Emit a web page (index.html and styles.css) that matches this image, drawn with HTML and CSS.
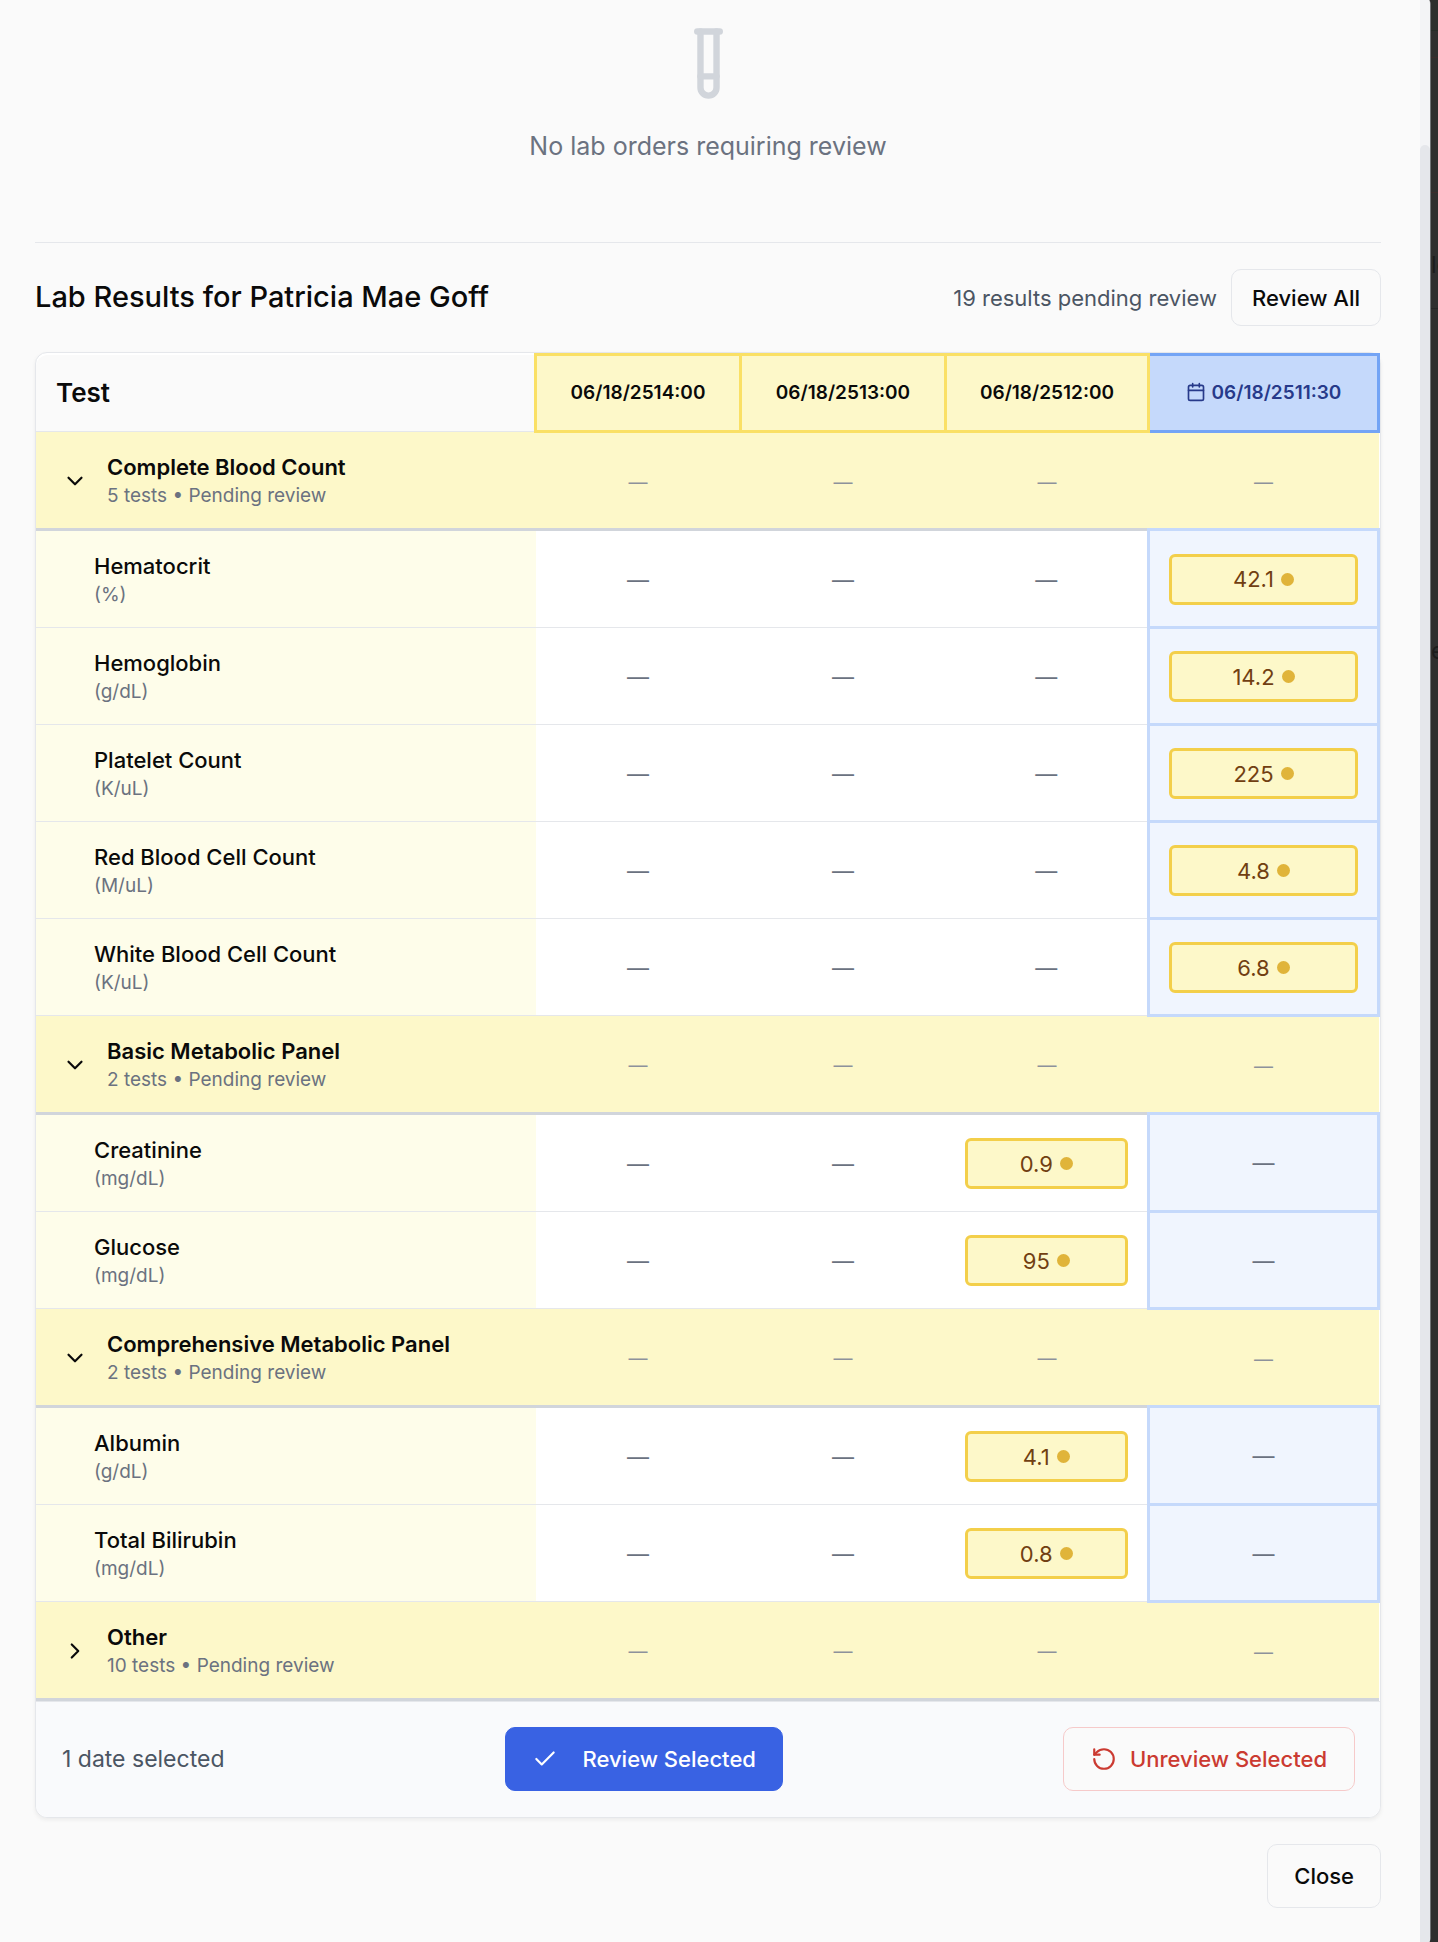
FILE: index.html
```html
<!DOCTYPE html>
<html lang="en">
<head>
<meta charset="utf-8">
<title>Lab Results</title>
<link rel="stylesheet" href="styles.css">
</head>
<body>
<main class="dialog">
  <div class="content">
    <section class="empty">
      <svg class="tube" viewBox="0 0 24 24"><path d="M14.5 2v17.5c0 1.4-1.1 2.5-2.5 2.5s-2.5-1.1-2.5-2.5V2"/><path d="M8.5 2h7"/><path d="M14.5 16h-5"/></svg>
      <p>No lab orders requiring review</p>
    </section>
    <section class="results">
      <header class="results-head">
        <h2>Lab Results for Patricia Mae Goff</h2>
        <div class="pending"><span>19 results pending review</span><button class="btn btn-small">Review All</button></div>
      </header>
      <div class="card">
        <table>
          <colgroup><col><col class="c-date"><col class="c-date"><col class="c-date-last"><col class="c-selected"></colgroup>
          <thead>
            <tr>
              <th class="corner" scope="col">Test</th>
              <th class="date" scope="col">06/18/2514:00</th>
              <th class="date" scope="col">06/18/2513:00</th>
              <th class="date" scope="col">06/18/2512:00</th>
              <th class="date picked" scope="col"><svg class="cal" viewBox="0 0 24 24"><path d="M8 2v4M16 2v4M3 10h18"/><rect x="3" y="4" width="18" height="18" rx="2"/></svg>06/18/2511:30</th>
            </tr>
          </thead>
          <tbody>
            <tr class="group"><th scope="row"><div class="group-label"><button class="toggle" aria-label="Collapse Complete Blood Count"><svg viewBox="0 0 24 24"><path d="m6 9 6 6 6-6"/></svg></button><div><div class="name">Complete Blood Count</div><div class="sub">5 tests • Pending review</div></div></div></th><td>—</td><td>—</td><td>—</td><td>—</td></tr>
            <tr class="test"><th scope="row"><div class="name">Hematocrit</div><div class="sub">(%)</div></th><td>—</td><td>—</td><td>—</td><td class="sel"><div class="value">42.1<i class="dot"></i></div></td></tr>
            <tr class="test"><th scope="row"><div class="name">Hemoglobin</div><div class="sub">(g/dL)</div></th><td>—</td><td>—</td><td>—</td><td class="sel"><div class="value">14.2<i class="dot"></i></div></td></tr>
            <tr class="test"><th scope="row"><div class="name">Platelet Count</div><div class="sub">(K/uL)</div></th><td>—</td><td>—</td><td>—</td><td class="sel"><div class="value">225<i class="dot"></i></div></td></tr>
            <tr class="test"><th scope="row"><div class="name">Red Blood Cell Count</div><div class="sub">(M/uL)</div></th><td>—</td><td>—</td><td>—</td><td class="sel"><div class="value">4.8<i class="dot"></i></div></td></tr>
            <tr class="test"><th scope="row"><div class="name">White Blood Cell Count</div><div class="sub">(K/uL)</div></th><td>—</td><td>—</td><td>—</td><td class="sel"><div class="value">6.8<i class="dot"></i></div></td></tr>
            <tr class="group"><th scope="row"><div class="group-label"><button class="toggle" aria-label="Collapse Basic Metabolic Panel"><svg viewBox="0 0 24 24"><path d="m6 9 6 6 6-6"/></svg></button><div><div class="name">Basic Metabolic Panel</div><div class="sub">2 tests • Pending review</div></div></div></th><td>—</td><td>—</td><td>—</td><td>—</td></tr>
            <tr class="test"><th scope="row"><div class="name">Creatinine</div><div class="sub">(mg/dL)</div></th><td>—</td><td>—</td><td><div class="value">0.9<i class="dot"></i></div></td><td class="sel">—</td></tr>
            <tr class="test"><th scope="row"><div class="name">Glucose</div><div class="sub">(mg/dL)</div></th><td>—</td><td>—</td><td><div class="value">95<i class="dot"></i></div></td><td class="sel">—</td></tr>
            <tr class="group"><th scope="row"><div class="group-label"><button class="toggle" aria-label="Collapse Comprehensive Metabolic Panel"><svg viewBox="0 0 24 24"><path d="m6 9 6 6 6-6"/></svg></button><div><div class="name">Comprehensive Metabolic Panel</div><div class="sub">2 tests • Pending review</div></div></div></th><td>—</td><td>—</td><td>—</td><td>—</td></tr>
            <tr class="test"><th scope="row"><div class="name">Albumin</div><div class="sub">(g/dL)</div></th><td>—</td><td>—</td><td><div class="value">4.1<i class="dot"></i></div></td><td class="sel">—</td></tr>
            <tr class="test"><th scope="row"><div class="name">Total Bilirubin</div><div class="sub">(mg/dL)</div></th><td>—</td><td>—</td><td><div class="value">0.8<i class="dot"></i></div></td><td class="sel">—</td></tr>
            <tr class="group"><th scope="row"><div class="group-label"><button class="toggle" aria-label="Expand Other"><svg viewBox="0 0 24 24"><path d="m9 18 6-6-6-6"/></svg></button><div><div class="name">Other</div><div class="sub">10 tests • Pending review</div></div></div></th><td>—</td><td>—</td><td>—</td><td>—</td></tr>
          </tbody>
        </table>
        <footer class="card-foot">
          <span class="count">1 date selected</span>
          <button class="btn btn-primary"><svg viewBox="0 0 24 24"><path d="M20 6 9 17l-5-5"/></svg>Review Selected</button>
          <button class="btn btn-danger"><svg viewBox="0 0 24 24"><path d="M3 12a9 9 0 1 0 9-9 9.75 9.75 0 0 0-6.74 2.74L3 8"/><path d="M3 3v5h5"/></svg>Unreview Selected</button>
        </footer>
      </div>
    </section>
    <div class="actions"><button class="btn">Close</button></div>
  </div>
  <div class="scroll-track"><div class="scroll-thumb"></div></div>
</main>
<aside class="backdrop" aria-hidden="true">
  <div class="band band-top"></div>
  <div class="band band-bar"></div>
  <div class="band band-panel"></div>
  <div class="band band-title">le</div>
  <div class="band-body">e</div>
</aside>
</body>
</html>
```
FILE: styles.css
```css
* { box-sizing: border-box; }

body {
  display: flex;
  min-height: 100vh;
  margin: 0;
  background: #2f2f2f;
  color: #0a0a0a;
  font: 400 22px/30px Inter, sans-serif;
}

h2, p { margin: 0; }

svg {
  flex: none;
  fill: none;
  stroke: currentColor;
  stroke-width: 2;
  stroke-linecap: round;
  stroke-linejoin: round;
}

.dialog {
  display: flex;
  flex: 1;
  min-width: 0;
  border-right: 1px solid #6f7275;
  border-radius: 0 2px 2px 0 / 0 7px 7px 0;
  background: #fafafa;
  overflow: hidden;
}

.backdrop {
  width: 7px;
  overflow: hidden;
  color: #1c1c1c;
  font-size: 23px;
}

.band { border-bottom: 1px solid #3a2c2c; }

.band-top {
  height: 31px;
  border-color: #262c28;
  background: #2d302d;
}

.band-bar { height: 27px; }

.band-panel { height: 135px; }

.band-title {
  height: 116px;
  padding-top: 57px;
  border-color: #262626;
}

.band-body { padding-top: 327px; }

.content {
  flex: 1;
  padding: 25px 39px 34px 35px;
}

.scroll-track {
  width: 10px;
  padding-top: 145px;
  background: #f3f4f6;
}

.scroll-thumb {
  height: 100%;
  background: #e5e7eb;
  border-radius: 5px 5px 0 0;
}

.empty {
  display: flex;
  flex-direction: column;
  align-items: center;
  gap: 25px;
  padding-bottom: 77px;
  color: #6b7280;
  font-size: 25px;
  line-height: 38px;
}

.tube {
  width: 77px;
  height: 77px;
  color: #d1d5db;
}

.results { border-top: 1px solid #e5e7eb; }

.results-head {
  display: flex;
  align-items: center;
  justify-content: space-between;
  padding: 26px 0;
}

.results-head h2 {
  padding-bottom: 2px;
  font-size: 29px;
  font-weight: 500;
  line-height: 40px;
}

.pending {
  display: flex;
  align-items: center;
  gap: 14px;
  color: #4b5563;
}

.btn {
  display: flex;
  align-items: center;
  height: 64px;
  padding: 0 26px;
  border: 1px solid #e5e7eb;
  border-radius: 10px;
  background: #fafafa;
  color: #0a0a0a;
  font: 500 22px/30px Inter, sans-serif;
}

.btn svg {
  width: 26px;
  height: 26px;
}

.btn-small {
  height: 57px;
  padding: 0 20px;
}

.card {
  border: 1px solid #e5e7eb;
  border-radius: 12px;
  background: #fff;
  box-shadow: 0 2px 4px rgba(0, 0, 0, .06);
}

table {
  width: 100%;
  table-layout: fixed;
  border-collapse: collapse;
}

.c-date { width: 205px; }
.c-date-last { width: 203px; }
.c-selected { width: 230px; }

th { text-align: left; font-weight: 500; }

td { text-align: center; }

.corner {
  height: 77px;
  padding: 0 20px;
  background: #fafafa;
  border-top-left-radius: 12px;
  font-size: 26px;
  font-weight: 600;
}

thead tr { border-bottom: 1px solid #e5e7eb; }

.date {
  padding: 0;
  border: 3px solid #fae065;
  background: #fdf8c9;
  font-size: 19px;
  font-weight: 600;
  text-align: center;
}

.picked {
  border-color: #73a4f5;
  background: #c5d9fb;
  color: #273a8a;
}

.cal {
  width: 20px;
  height: 20px;
  margin-right: 6px;
  vertical-align: -3px;
}

.group {
  border-bottom: 3px solid #d1d5db;
  background: #fdf8c9;
}

.group th { padding: 20px 26px 19px; }

.group td {
  padding: 4px 0 0;
  color: #8d929b;
  font-size: 19px;
}

.name { line-height: 31px; }

.group .name { font-weight: 600; }

.group-label {
  display: flex;
  align-items: center;
  gap: 19px;
}

.toggle {
  display: flex;
  padding: 0;
  border: 0;
  background: none;
  color: inherit;
}

.toggle svg {
  width: 26px;
  height: 26px;
}

.sub {
  color: #6b7280;
  font-size: 19px;
  font-weight: 400;
  line-height: 26px;
}

.test { border-bottom: 1px solid #e5e7eb; }

.test th {
  padding: 20px 58px 19px;
  background: #fefdea;
}

.test td {
  padding: 1px 19px 0;
  color: #6b7280;
}

.test .sel {
  border: 3px solid #c5d9fb;
  background: #f0f5fe;
}

.value {
  display: flex;
  align-items: center;
  justify-content: center;
  gap: 7px;
  height: 51px;
  border: 3px solid #f3cf4a;
  border-radius: 6px;
  background: #fdf8c9;
  color: #713f12;
}

.dot {
  width: 13px;
  height: 13px;
  border-radius: 50%;
  background: #e0b43a;
}

.card-foot {
  display: flex;
  align-items: center;
  justify-content: space-between;
  padding: 25px 25px 26px 26px;
  border-top: 1px solid #e5e7eb;
  border-radius: 0 0 12px 12px;
  background: #f9fafc;
  color: #4b5563;
}

.count { font-size: 23px; }

.btn-primary {
  gap: 25px;
  border-color: #3962e3;
  background: #3962e3;
  color: #fff;
}

.btn-danger {
  gap: 13px;
  padding: 0 27px;
  border-color: #f6caca;
  color: #cb3a31;
}

.actions {
  display: flex;
  justify-content: flex-end;
  padding-top: 26px;
}
```
